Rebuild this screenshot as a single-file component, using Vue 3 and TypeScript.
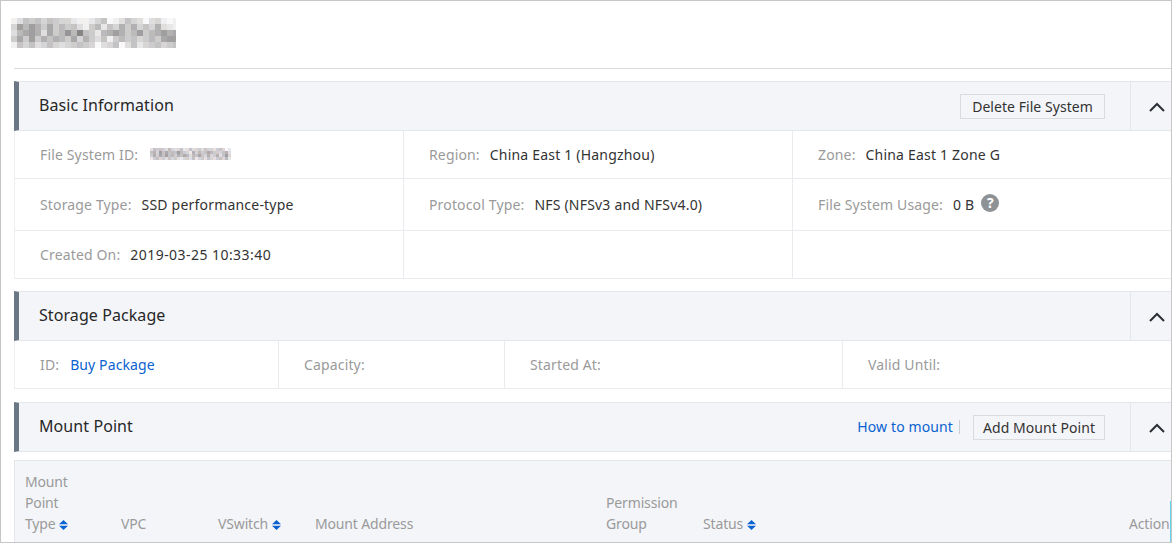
<script setup lang="ts">
interface Cell { label: string; value?: string; link?: boolean; help?: boolean; masked?: boolean; wide?: boolean }

const shades = (rows: string[], tintAmount: number) =>
  rows.flatMap((row, y) =>
    row.split('').map((c, x) => {
      const v = parseInt(c, 16)
      const g = 0x72 + v * 9
      const tint = (x * 7 + y * 5) % 3
      const r = Math.min(255, g + (tint === 0 ? tintAmount : 0))
      const b = Math.min(255, g + (tint === 1 ? tintAmount : 0))
      return { x, y, fill: `rgb(${r},${g},${b})` }
    })
  )

const titleCells = shades([
  'ec9a9b9abbdeedb9fec9bcfcbefe',
  'b5857a6a8a9cea8d9b7a7b9b7cde',
  'c8657c6a84829ad8757a85a87576',
  'a6a5a7978a6b7ac9ea8a9ba8a655',
  'e9b9cb9bcba9abfcb9fc9dba9ba9'
], 3)
const smallCells = shades([
  'c9a9ac8bcb9dc9cbac9bbca9bfdf',
  '97b59698958abd7b8a968aab97c',
  'a7a69598a7968c8969b7ba7c95b',
  'da9bac9bacdbac9dbac9bca9b8d'
], 10)

const basicRows: Cell[][] = [
  [
    { label: 'File System ID:', masked: true },
    { label: 'Region:', value: 'China East 1 (Hangzhou)' },
    { label: 'Zone:', value: 'China East 1 Zone G' }
  ],
  [
    { label: 'Storage Type:', value: 'SSD performance-type' },
    { label: 'Protocol Type:', value: 'NFS (NFSv3 and NFSv4.0)' },
    { label: 'File System Usage:', value: '0 B', help: true }
  ],
  [{ label: 'Created On:', value: '2019-03-25 10:33:40', wide: true }, { label: '' }, { label: '' }]
]

const packageCells: Cell[] = [
  { label: 'ID:', value: 'Buy Package', link: true },
  { label: 'Capacity:' },
  { label: 'Started At:' },
  { label: 'Valid Until:' }
]

const columns = [
  { lines: ['Mount', 'Point', 'Type'], sort: true, width: 96 },
  { lines: ['VPC'], sort: false, width: 97 },
  { lines: ['VSwitch'], sort: true, width: 97 },
  { lines: ['Mount Address'], sort: false, width: 291 },
  { lines: ['Permission', 'Group'], sort: false, width: 97 },
  { lines: ['Status'], sort: true, width: 426 },
  { lines: ['Action'], sort: false, width: 60 }
]
</script>

<template>
  <div class="page">
    <div class="title-bar">
      <svg class="mosaic" width="165" height="30" viewBox="0 0 165 30" role="img" aria-label="File system name, obscured">
        <rect v-for="c in titleCells" :key="`${c.x}-${c.y}`" :x="c.x * 6" :y="c.y * 6" width="6" height="6" :fill="c.fill" />
      </svg>
    </div>

    <section class="section basic">
      <header class="head">
        <h2>Basic Information</h2>
        <div class="actions"><button class="btn delete">Delete File System</button></div>
        <div class="toggle">
          <svg width="16" height="10" viewBox="0 0 16 10"><path d="M1 9 L8 2 L15 9" fill="none" stroke="#2b2f36" stroke-width="2" /></svg>
        </div>
      </header>
      <div class="info">
        <div v-for="(row, i) in basicRows" :key="i" class="info-row" :class="{ tall: i === 1 }">
          <div v-for="(cell, j) in row" :key="j" class="info-cell">
            <span v-if="cell.label" class="label">{{ cell.label }}</span>
            <svg v-if="cell.masked" class="mosaic small" width="81" height="12" viewBox="0 0 81 12" role="img" aria-label="Obscured ID">
              <rect v-for="c in smallCells" :key="`${c.x}-${c.y}`" :x="c.x * 3" :y="c.y * 3" width="3" height="3" :fill="c.fill" />
            </svg>
            <span v-if="cell.value" class="value" :class="{ wide: cell.wide }">{{ cell.value }}</span>
            <span v-if="cell.help" class="help">?</span>
          </div>
        </div>
      </div>
    </section>

    <section class="section package">
      <header class="head">
        <h2>Storage Package</h2>
        <div class="toggle">
          <svg width="16" height="10" viewBox="0 0 16 10"><path d="M1 9 L8 2 L15 9" fill="none" stroke="#2b2f36" stroke-width="2" /></svg>
        </div>
      </header>
      <div class="pkg-row">
        <div v-for="cell in packageCells" :key="cell.label" class="pkg-cell">
          <span class="label">{{ cell.label }}</span>
          <a v-if="cell.link" class="value link">{{ cell.value }}</a>
        </div>
      </div>
    </section>

    <section class="section mount">
      <header class="head">
        <h2>Mount Point</h2>
        <div class="actions">
          <a class="link how">How to mount</a>
          <span class="sep"></span>
          <button class="btn add">Add Mount Point</button>
        </div>
        <div class="toggle">
          <svg width="16" height="10" viewBox="0 0 16 10"><path d="M1 9 L8 2 L15 9" fill="none" stroke="#2b2f36" stroke-width="2" /></svg>
        </div>
      </header>
      <div class="table-head">
        <div v-for="col in columns" :key="col.lines.join()" class="th" :style="{ width: col.width + 'px' }">
          <span v-for="(line, n) in col.lines" :key="n" class="th-line">
            {{ line }}
            <svg v-if="col.sort && n === col.lines.length - 1" class="sort" width="9" height="10" viewBox="0 0 9 10">
              <path d="M4.5 0 L9 4.2 H0 Z M0 5.8 H9 L4.5 10 Z" fill="#0a62d0" />
            </svg>
          </span>
        </div>
      </div>
    </section>
    <div class="scroll-mark"></div>
  </div>
</template>

<style>
html, body { margin: 0; background: #fff; }
</style>

<style scoped>
.page {
  position: relative;
  box-sizing: border-box;
  width: 1172px;
  height: 543px;
  overflow: hidden;
  background: #fff;
  border: 1px solid #c6c6c6;
  padding-left: 13px;
  font-family: "Noto Sans", sans-serif;
  font-size: 14px;
  color: #333;
}
.title-bar {
  box-sizing: border-box;
  height: 68px;
  margin-left: -3px;
  padding-top: 17px;
  position: relative;
}
.title-bar::after {
  content: "";
  position: absolute;
  left: 3px;
  right: 0;
  bottom: 0;
  height: 1px;
  background: #dcdcdc;
}
.mosaic { display: block; }
.mosaic.small { display: inline-block; margin-left: 12px; margin-top: -1px; }
.section { width: 1157px; }
.basic { margin-top: 12px; }
.package { margin-top: 12px; }
.mount { margin-top: 13px; }
.head {
  box-sizing: border-box;
  height: 50px;
  display: flex;
  align-items: center;
  background: #f4f5f9;
  border-top: 1px solid #e3e6eb;
  border-bottom: 1px solid #e3e6eb;
  border-left: 5px solid #6c7785;
  padding-left: 20px;
}
.head h2 {
  margin: 0 0 2px;
  flex: 1;
  font-size: 16px;
  font-weight: 400;
  letter-spacing: 0.08px;
  color: #272727;
}
.actions { display: flex; align-items: center; padding-right: 25px; }
.btn {
  box-sizing: border-box;
  height: 25px;
  padding: 0;
  border: 1px solid #d9dbdf;
  background: #f4f5f9;
  font: inherit;
  letter-spacing: 0.05px;
  color: #333;
}
.delete { width: 145px; }
.add { width: 132px; }
.how { margin-bottom: 2px; letter-spacing: 0.12px; }
.sep { width: 1px; height: 14px; background: #c8ced6; margin: 0 13px 0 6px; }
.toggle {
  align-self: stretch;
  box-sizing: border-box;
  width: 41px;
  padding: 2px 6px 0 0;
  border-left: 1px solid #e3e6eb;
  display: flex;
  align-items: center;
  justify-content: flex-end;
}
.info { border-left: 1px solid #eceef1; }
.info-row {
  box-sizing: border-box;
  height: 48px;
  display: grid;
  grid-template-columns: 389px 389px 1fr;
  border-bottom: 1px solid #e9ebee;
}
.info-row.tall { height: 52px; }
.info-cell {
  display: flex;
  align-items: center;
  padding-left: 25px;
  border-right: 1px solid #e9ebee;
}
.info-cell:last-child { border-right: 0; }
.label { color: #9a9a9a; letter-spacing: 0.15px; }
.value { margin-left: 10px; color: #333; letter-spacing: 0.2px; }
.value.wide { letter-spacing: 0.45px; }
.link { color: #0a62d0; text-decoration: none; }
.pkg-cell .link { margin-left: 11px; letter-spacing: 0.1px; }
.help {
  width: 18px;
  height: 18px;
  margin: -3px 0 0 7px;
  border-radius: 50%;
  background: #8f9295;
  color: #fff;
  font-weight: 700;
  font-size: 14px;
  line-height: 18px;
  text-align: center;
}
.pkg-row {
  box-sizing: border-box;
  height: 48px;
  display: grid;
  grid-template-columns: 264px 226px 338px 1fr;
  border-left: 1px solid #eceef1;
  border-bottom: 1px solid #e9ebee;
}
.pkg-cell {
  display: flex;
  align-items: center;
  padding-left: 25px;
  border-right: 1px solid #e9ebee;
}
.pkg-cell:last-child { border-right: 0; }
.table-head {
  box-sizing: border-box;
  height: 90px;
  margin-top: 8px;
  padding: 10px 0 0 10px;
  display: flex;
  align-items: flex-start;
  background: #f4f5f9;
  border-top: 1px solid #e3e6eb;
  border-left: 1px solid #e3e6eb;
}
.th {
  flex: none;
  box-sizing: border-box;
  height: 63px;
  display: flex;
  flex-direction: column;
  justify-content: flex-end;
  color: #9a9a9a;
  line-height: 21px;
  letter-spacing: -0.15px;
}
.th-line { display: block; white-space: nowrap; }
.sort { vertical-align: -1px; }
.scroll-mark {
  position: absolute;
  right: 0;
  bottom: 0;
  width: 1px;
  height: 41px;
  background: #5fd4ea;
}
</style>
